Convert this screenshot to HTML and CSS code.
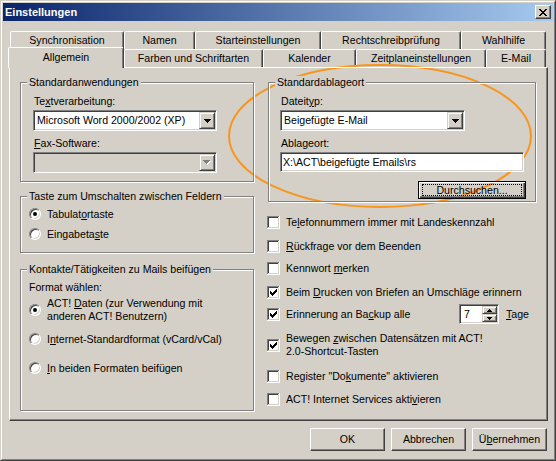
FILE: index.html
```html
<!DOCTYPE html>
<html lang="de">
<head>
<meta charset="utf-8">
<title>Einstellungen</title>
<link rel="stylesheet" href="styles.css">
</head>
<body>
<svg class="defs" width="0" height="0" aria-hidden="true">
  <defs>
    <symbol id="cb" viewBox="0 0 13 13">
      <rect width="13" height="13" fill="#fff"/>
      <path d="M0 0h12v1H1v11H0z" fill="#808080"/>
      <path d="M1 1h10v1H2v9H1z" fill="#404040"/>
      <path d="M12 0h1v13H0v-1h12z" fill="#fff"/>
      <path d="M11 1h1v11H1v-1h10z" fill="#D4D0C8"/>
    </symbol>
    <symbol id="tick" viewBox="0 0 13 13">
      <path d="M3 5h1v3H3zM4 6h1v3H4zM5 7h1v3H5zM6 6h1v3H6zM7 5h1v3H7zM8 4h1v3H8zM9 3h1v3H9z" fill="#000"/>
    </symbol>
    <symbol id="down" viewBox="0 0 7 4">
      <path d="M0 0h7v1H0zM1 1h5v1H1zM2 2h3v1H2zM3 3h1v1H3z"/>
    </symbol>
  </defs>
</svg>

<div class="window">
  <div class="frame">
    <div class="titlebar">
      <span class="title">Einstellungen</span>
      <span class="close">
        <svg width="8" height="7" viewBox="0 0 8 7"><path d="M0 0h2v1H0zM6 0h2v1H6zM1 1h2v1H1zM5 1h2v1H5zM2 2h4v1H2zM3 3h2v1H3zM2 4h4v1H2zM1 5h2v1H1zM5 5h2v1H5zM0 6h2v1H0zM6 6h2v1H6z" fill="#000"/></svg>
      </span>
    </div>

    <div class="client">
      <div class="tabstrip">
        <div class="tabrow back">
          <div class="tab t-sync">Synchronisation</div>
          <div class="tab t-namen">Namen</div>
          <div class="tab t-start">Starteinstellungen</div>
          <div class="tab t-recht">Rechtschreibprüfung</div>
          <div class="tab t-wahl">Wahlhilfe</div>
        </div>
        <div class="tabrow front">
          <div class="tab sel t-allg">Allgemein</div>
          <div class="tab t-farb">Farben und Schriftarten</div>
          <div class="tab t-kal">Kalender</div>
          <div class="tab t-zeit">Zeitplaneinstellungen</div>
          <div class="tab t-mail">E-Mail</div>
        </div>
      </div>

      <div class="panel">
        <div class="col col-left">
          <div class="group g-apps">
            <span class="legend">Standardanwendungen</span>
            <div class="label">Te<u>x</u>tverarbeitung:</div>
            <div class="combo">
              <span class="combo-text">Microsoft Word 2000/2002 (XP)</span>
              <span class="combo-btn"><svg width="7" height="4"><use href="#down"/></svg></span>
            </div>
            <div class="label gap"><u>F</u>ax-Software:</div>
            <div class="combo disabled">
              <span class="combo-text"></span>
              <span class="combo-btn"><svg class="dis-arrow" width="8" height="5" viewBox="0 0 8 5"><use href="#down" x="1" y="1" width="7" height="4" fill="#fff"/><use href="#down" x="0" y="0" width="7" height="4" fill="#808080"/></svg></span>
            </div>
          </div>

          <div class="group g-taste">
            <span class="legend">Taste zum Umschalten zwischen Feldern</span>
            <div class="opt"><span class="radio on"></span><span>Tabulat<u>o</u>rtaste</span></div>
            <div class="opt"><span class="radio"></span><span>Eingabeta<u>s</u>te</span></div>
          </div>

          <div class="group g-kontakte">
            <span class="legend">Kontakte/Tätigkeiten zu Mails beifügen</span>
            <div class="opt">Format wählen:</div>
            <div class="opt"><span class="radio on"></span><span>ACT! <u>D</u>aten (zur Verwendung mit<br>anderen ACT! Benutzern)</span></div>
            <div class="opt"><span class="radio"></span><span>I<u>n</u>ternet-Standardformat (vCard/vCal)</span></div>
            <div class="opt"><span class="radio"></span><span><u>I</u>n beiden Formaten beifügen</span></div>
          </div>
        </div>

        <div class="col col-right">
          <div class="group g-ablage">
            <span class="legend">Standardablageort</span>
            <div class="label">Dateit<u>y</u>p:</div>
            <div class="combo c-type">
              <span class="combo-text">Beigefügte E-Mail</span>
              <span class="combo-btn"><svg width="7" height="4"><use href="#down"/></svg></span>
            </div>
            <div class="label gap">Abla<u>g</u>eort:</div>
            <div class="edit">X:\ACT\beigefügte Emails\rs</div>
            <div class="browse"><span class="focus">Durchsuchen...</span></div>
          </div>

          <div class="checks">
            <div class="check"><svg class="cb" width="13" height="13"><use href="#cb"/></svg><span>Te<u>l</u>efonnummern immer mit Landeskennzahl</span></div>
            <div class="check"><svg class="cb" width="13" height="13"><use href="#cb"/></svg><span><u>R</u>ückfrage vor dem Beenden</span></div>
            <div class="check"><svg class="cb" width="13" height="13"><use href="#cb"/></svg><span>Kennwort <u>m</u>erken</span></div>
            <div class="check"><svg class="cb" width="13" height="13"><use href="#cb"/><use href="#tick"/></svg><span>Beim <u>D</u>rucken von Briefen an Umschläge erinnern</span></div>
            <div class="check"><svg class="cb" width="13" height="13"><use href="#cb"/><use href="#tick"/></svg><span class="spin-label">Erinnerung an Ba<u>c</u>kup alle</span>
              <span class="spin"><span class="spin-val">7</span><span class="spin-btns"><span class="spin-btn"><svg width="5" height="3" viewBox="0 0 5 3"><path d="M2 0h1v1H2zM1 1h3v1H1zM0 2h5v1H0z"/></svg></span><span class="spin-btn"><svg width="5" height="3" viewBox="0 0 5 3"><path d="M0 0h5v1H0zM1 1h3v1H1zM2 2h1v1H2z"/></svg></span></span></span>
              <span class="tage"><u>T</u>age</span>
            </div>
            <div class="check"><svg class="cb" width="13" height="13"><use href="#cb"/><use href="#tick"/></svg><span>Bewegen <u>z</u>wischen Datensätzen mit ACT!<br>2.0-Shortcut-Tasten</span></div>
            <div class="check"><svg class="cb" width="13" height="13"><use href="#cb"/></svg><span>Register "Do<u>k</u>umente" aktivieren</span></div>
            <div class="check"><svg class="cb" width="13" height="13"><use href="#cb"/></svg><span>ACT! Internet Services akti<u>v</u>ieren</span></div>
          </div>
        </div>
      </div>

      <div class="buttons">
        <button class="btn" type="button">OK</button>
        <button class="btn" type="button">Abbrechen</button>
        <button class="btn" type="button">Ü<u>b</u>ernehmen</button>
      </div>
    </div>
  </div>

  <svg class="annotation" width="556" height="461" viewBox="0 0 556 461" aria-hidden="true">
    <ellipse cx="380" cy="136" rx="151" ry="71" fill="none" stroke="#F7961F" stroke-width="2"/>
  </svg>
</div>
</body>
</html>
```

FILE: styles.css
```css
* {
  box-sizing: border-box;
}

html,
body {
  margin: 0;
  padding: 0;
  background: #D4D0C8;
}

body {
  font: 10.6px/13px "Liberation Sans", Arial, sans-serif;
  color: #000;
}

.defs {
  position: absolute;
  width: 0;
  height: 0;
}

.window {
  position: relative;
  width: 556px;
  height: 461px;
  border: 1px solid;
  border-color: #D4D0C8 #404040 #404040 #D4D0C8;
  background: #D4D0C8;
}

.frame {
  height: 100%;
  border: 1px solid;
  border-color: #fff #808080 #808080 #fff;
  padding: 1px;
}

.titlebar {
  height: 18px;
  display: flex;
  align-items: center;
  justify-content: space-between;
  padding: 0 2px;
  background: linear-gradient(to right, #0A246A, #A6CAF0);
}

.title {
  color: #fff;
  font-weight: bold;
  font-size: 11px;
}

.close {
  width: 16px;
  height: 14px;
  display: flex;
  align-items: center;
  justify-content: center;
  background: #D4D0C8;
  border: 1px solid;
  border-color: #fff #404040 #404040 #fff;
  box-shadow: inset -1px -1px #808080;
}

.client {
  padding: 10px 5px 0 6px;
}

/* Tabs */
.tabstrip {
  height: 36px;
  display: flex;
  flex-direction: column;
}

.tabrow {
  display: flex;
  height: 18px;
}

.tabrow.back {
  padding-left: 1px;
}

.tab {
  height: 18px;
  flex: none;
  display: flex;
  align-items: center;
  justify-content: center;
  background: #D4D0C8;
  border: 1px solid;
  border-bottom: none;
  border-color: #fff #404040 transparent #fff;
  border-radius: 2px 2px 0 0;
  box-shadow: inset -1px 0 #808080;
  white-space: nowrap;
}

.tab.sel {
  position: relative;
  z-index: 2;
  height: 21px;
  margin-top: -2px;
  margin-left: -1px;
  padding-bottom: 2px;
}

.t-sync { width: 114px; }
.t-namen { width: 71px; }
.t-start { width: 126px; }
.t-recht { width: 140px; }
.t-wahl { width: 85px; }
.t-allg { width: 116px; }
.t-farb { width: 139px; }
.t-kal { width: 93px; }
.t-zeit { width: 130px; }
.t-mail { width: 60px; }

/* Panel */
.panel {
  position: relative;
  z-index: 1;
  height: 354px;
  display: grid;
  grid-template-columns: 234px 270px;
  column-gap: 12px;
  align-items: start;
  padding: 14px 0 0 10px;
  border: 1px solid;
  border-color: #fff #404040 #404040 #fff;
  box-shadow: inset -1px -1px #808080;
}

.col {
  display: flex;
  flex-direction: column;
}

.group {
  position: relative;
  border: 1px solid #808080;
  box-shadow: inset 1px 1px #fff, 1px 1px #fff;
}

.legend {
  position: absolute;
  top: -7px;
  left: 6px;
  padding: 0 2px;
  background: #D4D0C8;
  white-space: nowrap;
}

.label {
  height: 13px;
  padding-left: 1px;
}

.label.gap {
  margin-top: 6px;
}

.g-apps {
  height: 100px;
  display: flex;
  flex-direction: column;
  padding: 12px 0 0 12px;
}

.g-apps .combo {
  margin-top: 2px;
}

.g-taste {
  height: 57px;
  margin-top: 14px;
  display: grid;
  grid-template-rows: 20px 20px;
  padding: 7px 0 0 8px;
}

.g-kontakte {
  height: 142px;
  margin-top: 16px;
  display: grid;
  grid-template-rows: 14px 32px 26px 32px;
  align-content: start;
  padding: 10px 0 0 8px;
}

.opt {
  display: flex;
  align-items: center;
  gap: 6px;
}

.radio {
  position: relative;
  flex: none;
  width: 12px;
  height: 12px;
  border-radius: 50%;
  background: #fff;
  border: 1px solid;
  border-color: #808080 #fff #fff #808080;
  box-shadow: inset 1px 1px #404040, inset -1px -1px #D4D0C8;
}

.radio.on::after {
  content: "";
  position: absolute;
  left: 3px;
  top: 3px;
  width: 4px;
  height: 4px;
  border-radius: 50%;
  background: #000;
}

/* Combo box */
.combo {
  width: 184px;
  height: 21px;
  display: flex;
  align-items: center;
  padding: 1px;
  background: #fff;
  border: 1px solid;
  border-color: #808080 #fff #fff #808080;
  box-shadow: inset 1px 1px #404040, inset -1px -1px #D4D0C8;
}

.combo.disabled {
  background: #D4D0C8;
}

.combo-text {
  flex: 1;
  padding-left: 2px;
  white-space: nowrap;
}

.combo-btn {
  flex: none;
  width: 16px;
  height: 17px;
  display: flex;
  align-items: center;
  justify-content: center;
  background: #D4D0C8;
  border: 1px solid;
  border-color: #D4D0C8 #404040 #404040 #D4D0C8;
  box-shadow: inset 1px 1px #fff, inset -1px -1px #808080;
}

.combo-btn svg {
  display: block;
}

/* Right group */
.g-ablage {
  height: 120px;
  margin-left: 2px;
  display: flex;
  flex-direction: column;
  padding: 12px 0 0 11px;
}

.c-type {
  width: 185px;
  margin-top: 2px;
}

.edit {
  width: 244px;
  height: 20px;
  margin-top: 2px;
  display: flex;
  align-items: center;
  padding: 0 2px;
  background: #fff;
  border: 1px solid;
  border-color: #808080 #fff #fff #808080;
  box-shadow: inset 1px 1px #404040, inset -1px -1px #D4D0C8;
  white-space: nowrap;
}

.browse {
  align-self: flex-end;
  width: 108px;
  height: 18px;
  margin: 9px 9px 0 0;
  display: flex;
  padding: 2px 3px;
  border: 1px solid #000;
  box-shadow: inset 1px 1px #fff, inset -1px -1px #404040, inset -2px -2px #808080;
}

.focus {
  flex: 1;
  display: flex;
  align-items: center;
  justify-content: center;
  border: 1px dotted #000;
  line-height: 11px;
}

/* Checkboxes */
.checks {
  margin-top: 6px;
  display: grid;
  grid-template-rows: 28px 20px 24px 24px 20px 42px 20px 26px;
  padding-left: 1px;
}

.check {
  display: flex;
  align-items: center;
  gap: 6px;
  white-space: nowrap;
}

.cb {
  flex: none;
  display: block;
}

.spin-label {
  width: 167px;
}

.spin {
  width: 40px;
  height: 20px;
  display: flex;
  padding: 1px;
  background: #fff;
  border: 1px solid;
  border-color: #808080 #fff #fff #808080;
  box-shadow: inset 1px 1px #404040, inset -1px -1px #D4D0C8;
}

.spin-val {
  flex: 1;
  padding-left: 3px;
  display: flex;
  align-items: center;
}

.spin-btns {
  width: 15px;
  display: flex;
  flex-direction: column;
}

.spin-btn {
  flex: 1;
  display: flex;
  align-items: center;
  justify-content: center;
  background: #D4D0C8;
  border: 1px solid;
  border-color: #D4D0C8 #404040 #404040 #D4D0C8;
  box-shadow: inset 1px 1px #fff, inset -1px -1px #808080;
}

.spin-btn svg {
  display: block;
}

.tage {
  margin-left: 1px;
}

/* Dialog buttons */
.buttons {
  display: flex;
  justify-content: flex-end;
  gap: 6px;
  margin-top: 7px;
  padding-right: 1px;
}

.btn {
  width: 75px;
  height: 23px;
  padding: 0;
  display: flex;
  align-items: center;
  justify-content: center;
  font: inherit;
  color: #000;
  background: #D4D0C8;
  border: 1px solid;
  border-color: #fff #404040 #404040 #fff;
  border-radius: 0;
  box-shadow: inset -1px -1px #808080;
}

.annotation {
  position: absolute;
  left: -1px;
  top: -1px;
  pointer-events: none;
}
```
